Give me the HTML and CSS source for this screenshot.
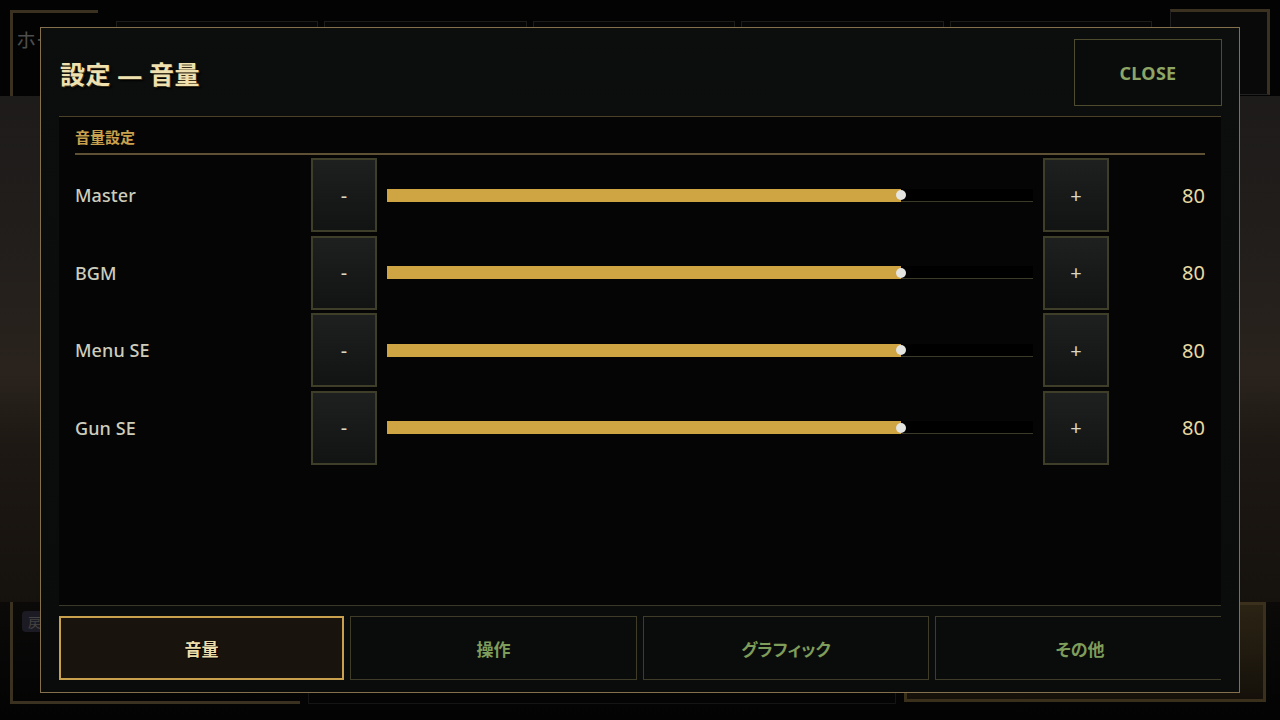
FILE: index.html
```html
<!DOCTYPE html>
<html lang="ja">
<head>
<meta charset="utf-8">
<title>設定 — 音量</title>
<link rel="stylesheet" href="styles.css">
</head>
<body>
<div class="scene">
  <div class="topbar">
    <div class="home"><span class="home-text">ホーム</span></div>
    <div class="nav">
      <div class="nav-item"></div>
      <div class="nav-item"></div>
      <div class="nav-item"></div>
      <div class="nav-item"></div>
      <div class="nav-item"></div>
    </div>
    <div class="corner"></div>
  </div>
  <div class="middle"></div>
  <div class="bottombar">
    <div class="bottom-left"><span class="chip">戻</span></div>
    <div class="bottom-mid"></div>
    <div class="bottom-right"></div>
  </div>
</div>

<div class="modal">
  <div class="modal-header">
    <h1 class="title">設定 <span class="dash">—</span> 音量</h1>
    <button class="close-btn">CLOSE</button>
  </div>
  <div class="content">
    <div class="section-title">音量設定</div>
    <div class="rows">
      <div class="row">
        <div class="label">Master</div>
        <button class="step">-</button>
        <div class="slider"><div class="fill" style="--v:0.8"><span class="thumb"></span></div></div>
        <button class="step">+</button>
        <div class="value">80</div>
      </div>
      <div class="row">
        <div class="label">BGM</div>
        <button class="step">-</button>
        <div class="slider"><div class="fill" style="--v:0.8"><span class="thumb"></span></div></div>
        <button class="step">+</button>
        <div class="value">80</div>
      </div>
      <div class="row">
        <div class="label">Menu SE</div>
        <button class="step">-</button>
        <div class="slider"><div class="fill" style="--v:0.8"><span class="thumb"></span></div></div>
        <button class="step">+</button>
        <div class="value">80</div>
      </div>
      <div class="row">
        <div class="label">Gun SE</div>
        <button class="step">-</button>
        <div class="slider"><div class="fill" style="--v:0.8"><span class="thumb"></span></div></div>
        <button class="step">+</button>
        <div class="value">80</div>
      </div>
    </div>
  </div>
  <div class="tabs-wrap">
    <div class="tabs">
      <button class="tab active">音量</button>
      <button class="tab">操作</button>
      <button class="tab">グラフィック</button>
      <button class="tab">その他</button>
    </div>
  </div>
</div>
</body>
</html>
```

FILE: styles.css
```css
* { box-sizing: border-box; }
html, body { margin: 0; padding: 0; }
body {
  width: 1280px;
  height: 720px;
  overflow: hidden;
  background: #050505;
  font-family: "Noto Sans", "Noto Sans CJK JP", sans-serif;
  position: relative;
}

/* background scene */
.scene {
  width: 1280px;
  height: 720px;
  display: flex;
  flex-direction: column;
  background: linear-gradient(180deg, #1c1a1a 0%, #201d1b 30%, #2a231d 52%, #1d1813 62%, #15110d 85%, #0c0a08 100%);
}
.topbar {
  height: 96px;
  background: #030303;
  display: flex;
  align-items: flex-start;
  padding: 10px 10px 0 10px;
  gap: 18px;
}
.home {
  width: 88px;
  height: 86px;
  border-left: 3px solid #3b3121;
  border-top: 3px solid #3b3121;
  padding: 12px 0 0 3px;
}
.home-text { color: #4d4d4d; font-size: 20px; font-family: "Noto Sans CJK JP", sans-serif; }
.nav {
  flex: 1;
  display: flex;
  gap: 6px;
  margin-top: 11px;
}
.nav-item {
  flex: 1;
  height: 50px;
  border: 1px solid #1d1d1a;
  background: #060606;
}
.corner {
  width: 100px;
  height: 86px;
  border: 1px solid #222;
  border-right: 3px solid #3b3121;
  border-top: 3px solid #3b3121;
  margin-top: -1px;
  background: #090909;
}
.middle { flex: 1; }
.bottombar {
  height: 118px;
  display: flex;
  gap: 8px;
  padding: 0 14px 16px 10px;
  align-items: flex-end;
  background: linear-gradient(180deg, #0b0a09 0%, #030303 100%);
}
.bottom-left {
  width: 290px;
  height: 100%;
  border-left: 3px solid #3b3121;
  border-bottom: 3px solid #3b3121;
  padding: 8px 0 0 9px;
}
.chip {
  display: inline-block;
  background: #1c1a22;
  color: #444;
  font-size: 13px;
  padding: 1px 6px;
  border-radius: 4px;
}
.bottom-mid { flex: 1; height: 60px; border: 1px solid #151515; }
.bottom-right {
  width: 362px;
  height: 100px;
  margin-bottom: 2px;
  border: 3px solid #3a301c;
  background: linear-gradient(180deg, #2b2314 0%, #15110a 100%);
}

/* modal */
.modal {
  position: absolute;
  left: 40px;
  top: 27px;
  width: 1200px;
  height: 666px;
  border: 1px solid #85704d;
  background: linear-gradient(180deg, #0c0d0d 0%, #0a0b0b 100%);
  padding: 11px 18px 12px 18px;
  display: flex;
  flex-direction: column;
}
.modal-header {
  display: flex;
  align-items: center;
  justify-content: space-between;
  height: 78px;
  padding-bottom: 10px;
  border-bottom: 1px solid #4a4128;
}
.title {
  margin: 0 0 0 1px;
  font-family: "Noto Sans CJK JP", "Noto Sans", sans-serif;
  font-size: 25px;
  font-weight: 700;
  color: #efe0b0;
  letter-spacing: 0.5px;
  text-shadow: 1px 1px 0 #3a2f1a, 2px 2px 2px #000;
}
.dash {
  font-family: "Noto Sans", sans-serif;
  font-weight: 700;
}
.close-btn {
  width: 148px;
  height: 67px;
  margin-right: -1px;
  background: #0a0c0b;
  border: 1px solid #4f4b2e;
  color: #8ea665;
  font-family: "Noto Sans", sans-serif;
  font-weight: 700;
  font-size: 18px;
  letter-spacing: 0.3px;
  padding: 0;
}

.content {
  flex: 1;
  background: #050505;
  padding: 0 16px 0 16px;
  display: flex;
  flex-direction: column;
}
.section-title {
  height: 38px;
  padding-top: 10px;
  border-bottom: 2px solid #5f5134;
  color: #c9a14e;
  font-family: "Noto Sans CJK JP", sans-serif;
  font-weight: 700;
  font-size: 15px;
  line-height: 19px;
  padding-left: 0;
}
.rows {
  display: flex;
  flex-direction: column;
  gap: 3.5px;
  padding-top: 3px;
}
.row {
  height: 74px;
  display: grid;
  grid-template-columns: 236px 66px 1fr 66px 96px;
  column-gap: 0;
  align-items: center;
}
.label {
  color: #cdcdbd;
  font-size: 18px;
  font-weight: 500;
  letter-spacing: 0.1px;
}
.step {
  width: 66px;
  height: 74px;
  background: linear-gradient(180deg, #1e2020 0%, #121414 100%);
  border: 2px solid #3f3f29;
  color: #d8d8c8;
  font-family: "Noto Sans", sans-serif;
  font-size: 20px;
  font-weight: 400;
  padding: 0;
}
.slider {
  margin: 0 10px 0 10px;
  height: 13px;
  background: #000;
  border-bottom: 1px solid #3c3b2a;
  position: relative;
}
.fill {
  height: 13px;
  width: calc(5px + var(--v) * (100% - 10px));
  background: #cfa443;
  position: relative;
}
.thumb {
  position: absolute;
  right: -5px;
  top: 1.5px;
  width: 10px;
  height: 10px;
  border-radius: 50%;
  background: #e4e4e0;
}
.value {
  text-align: right;
  color: #e9d9a2;
  font-size: 20px;
  font-weight: 400;
}

.tabs-wrap {
  overflow: hidden;
  padding-top: 10px;
  border-top: 1px solid #3a3826;
  height: 75px;
}
.tabs {
  width: 1166px;
  display: grid;
  grid-template-columns: 285px 287px 286px 1fr;
  gap: 6px;
}
.tab {
  height: 64px;
  background: #0a0b0b;
  border: 1px solid #3f3d28;
  color: #7e9c5a;
  font-family: "Noto Sans CJK JP", sans-serif;
  font-feature-settings: "palt";
  font-size: 17px;
  font-weight: 700;
  padding: 0;
}
.tab.active {
  background: #18130c;
  border: 2px solid #c9a14e;
  color: #ecdcaa;
  text-shadow: 1px 1px 1px #000;
}
```
